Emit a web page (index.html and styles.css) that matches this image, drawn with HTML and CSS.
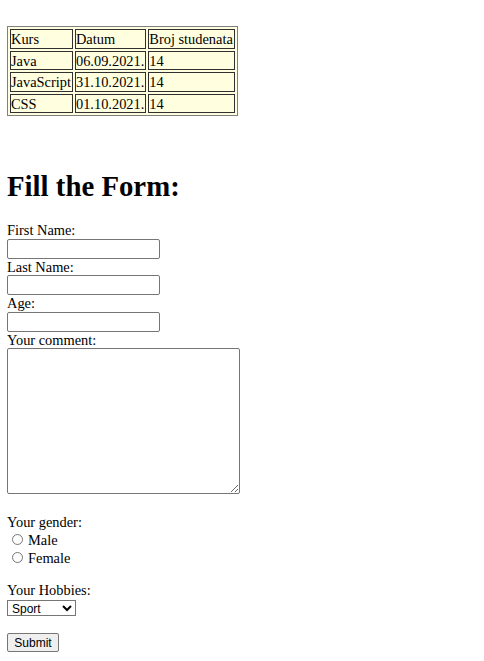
FILE: index.html
```html
<!DOCTYPE html>
<html>
<head>
<meta charset="utf-8">
<link rel="stylesheet" href="styles.css">
</head>
<body>
<div class="top-space"></div>
<table class="courses">
  <tr><td>Kurs</td><td>Datum</td><td>Broj studenata</td></tr>
  <tr><td>Java</td><td>06.09.2021.</td><td>14</td></tr>
  <tr><td>JavaScript</td><td>31.10.2021.</td><td>14</td></tr>
  <tr><td>CSS</td><td>01.10.2021.</td><td>14</td></tr>
</table>
<div class="gap"></div>
<h1 class="title">Fill the Form:</h1>
<form class="form">
  <label class="lbl">First Name:</label>
  <input class="txt" type="text">
  <label class="lbl">Last Name:</label>
  <input class="txt" type="text">
  <label class="lbl">Age:</label>
  <input class="txt" type="text">
  <label class="lbl">Your comment:</label>
  <textarea class="comment"></textarea>
  <div class="lbl">Your gender:</div>
  <label class="opt"><input type="radio" name="g" class="radio"> Male</label>
  <label class="opt"><input type="radio" name="g" class="radio"> Female</label>
  <div class="lbl hobbies">Your Hobbies:</div>
  <select class="sel"><option>Sport</option><option>Music</option></select>
  <button class="submit" type="button">Submit</button>
</form>
</body>
</html>
```
FILE: styles.css
```css
html { background: #fff; }
body {
  margin: 7px;
  font-family: "Liberation Serif", "Times New Roman", serif;
  font-size: 14.4px;
  color: #000;
}
.top-space { height: 19px; }
.courses {
  border: 1px solid #808080;
  border-spacing: 2px;
  background: #ffffe0;
}
.courses td {
  border: 1px solid #303030;
  padding: 1px 1px 0.5px 0;
  line-height: 16px;
  white-space: nowrap;
}
.gap { height: 35px; }
.title {
  font-size: 28.8px;
  font-weight: bold;
  line-height: 33px;
  margin: 19px 0 19px 0;
}
.form { margin: 0; }
.lbl {
  display: block;
  line-height: 16.5px;
}
.txt {
  display: block;
  font-family: Arial, "Liberation Sans", sans-serif;
  font-size: 12px;
  width: 153px;
  height: 20px;
  box-sizing: border-box;
  border: 1px solid #767676;
  border-radius: 2px;
  margin: 0;
  padding: 1px 2px;
  background: #fff;
}
.comment {
  display: block;
  width: 233px;
  height: 146px;
  box-sizing: border-box;
  border: 1px solid #767676;
  border-radius: 2px;
  margin: 0 0 20px 0;
  resize: both;
  background: #fff;
}
.opt {
  display: flex;
  align-items: center;
  height: 18px;
  line-height: 18px;
}
.radio {
  width: 11px;
  height: 11px;
  margin: 0 5px 0 5px;
}
.hobbies { margin-top: 15px; }
.sel {
  display: block;
  font-family: Arial, "Liberation Sans", sans-serif;
  font-size: 12px;
  width: 69px;
  height: 16px;
  margin: 2px 0 0 0;
  padding: 0;
  border: 1px solid #767676;
  border-radius: 0;
  background: #fff;
  color: #000;
}
.submit {
  display: block;
  font-family: Arial, "Liberation Sans", sans-serif;
  font-size: 12px;
  margin: 17px 0 0 0;
  padding: 0 6px;
  width: 52px;
  height: 19px;
  border: 1px solid #767676;
  border-radius: 2px;
  background: #efefef;
  color: #000;
}
```
